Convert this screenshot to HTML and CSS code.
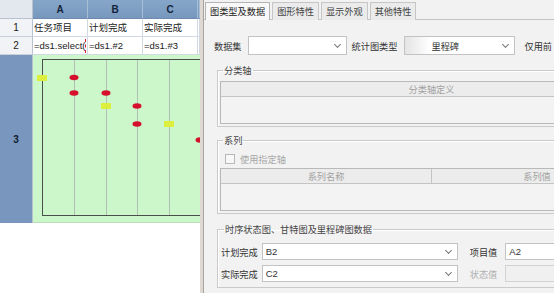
FILE: index.html
```html
<!DOCTYPE html>
<html lang="zh-CN">
<head>
    <meta charset="UTF-8">
    <title>统计图设置</title>
    <link rel="stylesheet" href="styles.css">
</head>
<body>
    <div class="screen">
        <!-- 报表单元格 -->
        <div class="sheet">
            <div class="sheet-grid">
                <div class="corner"></div>
                <div class="col-head">A</div>
                <div class="col-head">B</div>
                <div class="col-head">C</div>
                <div class="col-head"></div>

                <div class="row-head">1</div>
                <div class="cell">任务项目</div>
                <div class="cell">计划完成</div>
                <div class="cell">实际完成</div>
                <div class="cell"></div>

                <div class="row-head">2</div>
                <div class="cell clip">=ds1.select(</div>
                <div class="cell">=ds1.#2</div>
                <div class="cell">=ds1.#3</div>
                <div class="cell"></div>

                <div class="row-head selected">3</div>
                <div class="cell chart-cell">
                    <svg class="chart" width="167" height="167" viewBox="0 0 167 167">
                        <g stroke="#b4bdb4" stroke-width="1">
                            <line x1="41.5" y1="4" x2="41.5" y2="161"/>
                            <line x1="73.5" y1="4" x2="73.5" y2="161"/>
                            <line x1="104.5" y1="4" x2="104.5" y2="161"/>
                            <line x1="136.5" y1="4" x2="136.5" y2="161"/>
                        </g>
                        <rect x="9.5" y="4.5" width="170" height="156" fill="none" stroke="#4a4f4a"/>
                        <g fill="#d4102c">
                            <ellipse cx="41" cy="22.5" rx="4.5" ry="2.8"/>
                            <ellipse cx="41" cy="38" rx="4.5" ry="2.8"/>
                            <ellipse cx="73" cy="38" rx="4.5" ry="2.8"/>
                            <ellipse cx="104" cy="51" rx="4.5" ry="2.8"/>
                            <ellipse cx="104" cy="69" rx="4.5" ry="2.8"/>
                            <ellipse cx="167" cy="85" rx="4.5" ry="2.8"/>
                        </g>
                        <g fill="#dcee3e">
                            <rect x="4" y="20" width="10" height="6"/>
                            <rect x="68" y="48" width="10" height="6"/>
                            <rect x="131" y="66" width="10" height="6"/>
                        </g>
                    </svg>
                </div>
            </div>
        </div>

        <div class="splitter"></div>

        <!-- 统计图属性面板 -->
        <div class="panel">
            <div class="tabs">
                <div class="tab active">图类型及数据</div>
                <div class="tab">图形特性</div>
                <div class="tab">显示外观</div>
                <div class="tab">其他特性</div>
            </div>

            <div class="content">
                <div class="data-row">
                    <span class="label">数据集</span>
                    <div class="combo combo-ds"><span></span><i class="arrow"></i></div>
                    <span class="label">统计图类型</span>
                    <div class="combo combo-type"><span class="thumb"></span><span>里程碑</span><i class="arrow"></i></div>
                    <span class="label">仅用前</span>
                </div>

                <fieldset class="group group-axis">
                    <legend>分类轴</legend>
                    <div class="grid-table">
                        <div class="grid-head">
                            <div class="grid-col">分类轴定义</div>
                        </div>
                    </div>
                </fieldset>

                <fieldset class="group group-series">
                    <legend>系列</legend>
                    <label class="check-row"><span class="checkbox"></span>使用指定轴</label>
                    <div class="grid-table">
                        <div class="grid-head">
                            <div class="grid-col first">系列名称</div>
                            <div class="grid-col">系列值</div>
                        </div>
                    </div>
                </fieldset>

                <fieldset class="group group-time">
                    <legend>时序状态图、甘特图及里程碑图数据</legend>
                    <div class="field-row">
                        <span class="label">计划完成</span>
                        <div class="combo combo-wide"><span class="latin">B2</span><i class="arrow"></i></div>
                        <span class="label label-right">项目值</span>
                        <div class="text-field"><span class="latin">A2</span></div>
                    </div>
                    <div class="field-row">
                        <span class="label">实际完成</span>
                        <div class="combo combo-wide"><span class="latin">C2</span><i class="arrow"></i></div>
                        <span class="label label-right disabled">状态值</span>
                        <div class="text-field disabled"></div>
                    </div>
                </fieldset>
            </div>
        </div>
    </div>
</body>
</html>
```

FILE: styles.css
```css
* {
    margin: 0;
    padding: 0;
    box-sizing: border-box;
}

body {
    background: #fff;
    font-family: "Noto Sans CJK SC", "Liberation Sans", sans-serif;
    color: #222;
    overflow: hidden;
}

.screen {
    display: flex;
    width: 554px;
    height: 293px;
}

/* 报表单元格 */
.sheet {
    width: 200px;
    flex: none;
    background: #fff;
    overflow: hidden;
}

.sheet-grid {
    display: grid;
    grid-template-columns: 33px 55px 55px 55px 2px;
    grid-template-rows: 19px 18px 18px 168px;
}

.corner {
    background: #e3e8ee;
    border-right: 1px solid #b9c3cf;
    border-bottom: 1px solid #b9c3cf;
}

.col-head {
    background: linear-gradient(#86a6c9, #7797bd);
    border-right: 1px solid #a9bdd4;
    border-bottom: 1px solid #6d8bb0;
    color: #14243a;
    font: bold 10px "Liberation Sans", sans-serif;
    display: flex;
    align-items: center;
    justify-content: center;
}

.row-head {
    background: #f1f3f6;
    border-right: 1px solid #b9c3cf;
    border-bottom: 1px solid #c9d0da;
    font: 10px "Liberation Sans", sans-serif;
    color: #222;
    display: flex;
    align-items: center;
    justify-content: center;
}

.row-head.selected {
    background: #7896be;
    font-weight: bold;
    color: #0f1c30;
    border-bottom: none;
}

.cell {
    border-right: 1px solid #d3d9e2;
    border-bottom: 1px solid #d3d9e2;
    font: 9.5px "Liberation Sans", "Noto Sans CJK SC", sans-serif;
    line-height: 17px;
    padding-left: 1px;
    white-space: nowrap;
    overflow: hidden;
    position: relative;
}

.cell.clip::after {
    content: "";
    position: absolute;
    right: 1px;
    top: 2px;
    height: 14px;
    border-right: 1px dashed #e0202c;
}

.chart-cell {
    grid-column: 2 / 6;
    background: #cbf7cb;
    border: none;
    border-bottom: 1px solid #b7dcb7;
    padding: 0;
}

.chart {
    display: block;
}

.splitter {
    width: 4px;
    flex: none;
    background: #ddd8d2;
    border-right: 1px solid #a9a39c;
}

/* 统计图属性面板 */
.panel {
    flex: 1;
    background: #f2f2f2;
    overflow: hidden;
    font-size: 9.2px;
    color: #333;
}

.tabs {
    display: flex;
    height: 20px;
    padding: 2px 0 0 1px;
    border-bottom: 1px solid #c4c4c4;
    gap: 2px;
}

.tab {
    height: 18px;
    padding: 0 4px;
    line-height: 16px;
    border: 1px solid #c6c6c6;
    border-bottom: none;
    background: #ebebeb;
    color: #444;
    white-space: nowrap;
}

.tab.active {
    background: #f8f8f8;
    border-color: #b4b4b4;
    color: #222;
}

.content {
    width: 440px;
    padding: 16px 0 0 10px;
}

.data-row {
    display: flex;
    align-items: center;
    height: 19px;
    white-space: nowrap;
}

.label {
    margin-right: 6px;
    white-space: nowrap;
}

.combo {
    position: relative;
    height: 19px;
    background: #fff;
    border: 1px solid #c3c3c3;
    display: flex;
    align-items: center;
    flex: none;
}

.combo-ds {
    width: 99px;
    margin-right: 5px;
}

.combo-type {
    width: 111px;
    margin-right: 10px;
}

.combo-type .thumb {
    width: 25px;
    height: 17px;
    background: linear-gradient(90deg, #e4e4e4, #fff);
    margin-right: 2px;
}

.arrow {
    position: absolute;
    right: 6px;
    top: 5px;
    width: 5px;
    height: 5px;
    border-right: 1px solid #777;
    border-bottom: 1px solid #777;
    transform: rotate(45deg);
}

.group {
    margin: 9px 0 0 3px;
    border: 1px solid #cacaca;
    box-shadow: 1px 1px 0 #fff inset;
    padding: 0 0 2px 2px;
}

.group legend {
    margin-left: 3px;
    padding: 0 1px;
    line-height: 12px;
    color: #444;
}

.group-series {
    margin-top: 7px;
}

.group-time {
    margin-top: 9px;
    padding: 0 0 5px 3px;
}

.grid-table {
    margin-top: 5px;
    height: 43px;
    border: 1px solid #b9b9b9;
    background: #f3f3f3;
}

.grid-head {
    display: flex;
    height: 15px;
    border-bottom: 1px solid #c4c4c4;
    background: #ececec;
}

.grid-col {
    flex: 1;
    text-align: center;
    line-height: 14px;
    color: #a2a2a2;
}

.grid-col.first {
    flex: none;
    width: 211px;
    border-right: 1px solid #c4c4c4;
}

.check-row {
    display: flex;
    align-items: center;
    height: 22px;
    padding: 3px 0 0 5px;
    color: #a8a8a8;
}

.check-row .checkbox {
    width: 10px;
    height: 10px;
    border: 1px solid #b8b8b8;
    background: #f8f8f8;
    margin-right: 5px;
}

.group-series .grid-table {
    margin-top: 0;
}

.field-row {
    display: flex;
    align-items: center;
    height: 17px;
    margin-top: 8px;
}

.field-row + .field-row {
    margin-top: 5px;
}

.field-row .label {
    margin-right: 4px;
}

.combo-wide {
    width: 196px;
    height: 17px;
    padding-left: 3px;
}

.combo-wide .arrow {
    top: 4px;
}

.label-right {
    margin-left: 12px;
    margin-right: 8px !important;
}

.text-field {
    width: 120px;
    height: 17px;
    background: #fff;
    border: 1px solid #c3c3c3;
    padding-left: 3px;
    display: flex;
    align-items: center;
}

.latin {
    font: 9.5px "Liberation Sans", sans-serif;
    color: #333;
}

.disabled {
    color: #b0b0b0;
}

.text-field.disabled {
    background: #f0f0f0;
    border-color: #d2d2d2;
}
```
